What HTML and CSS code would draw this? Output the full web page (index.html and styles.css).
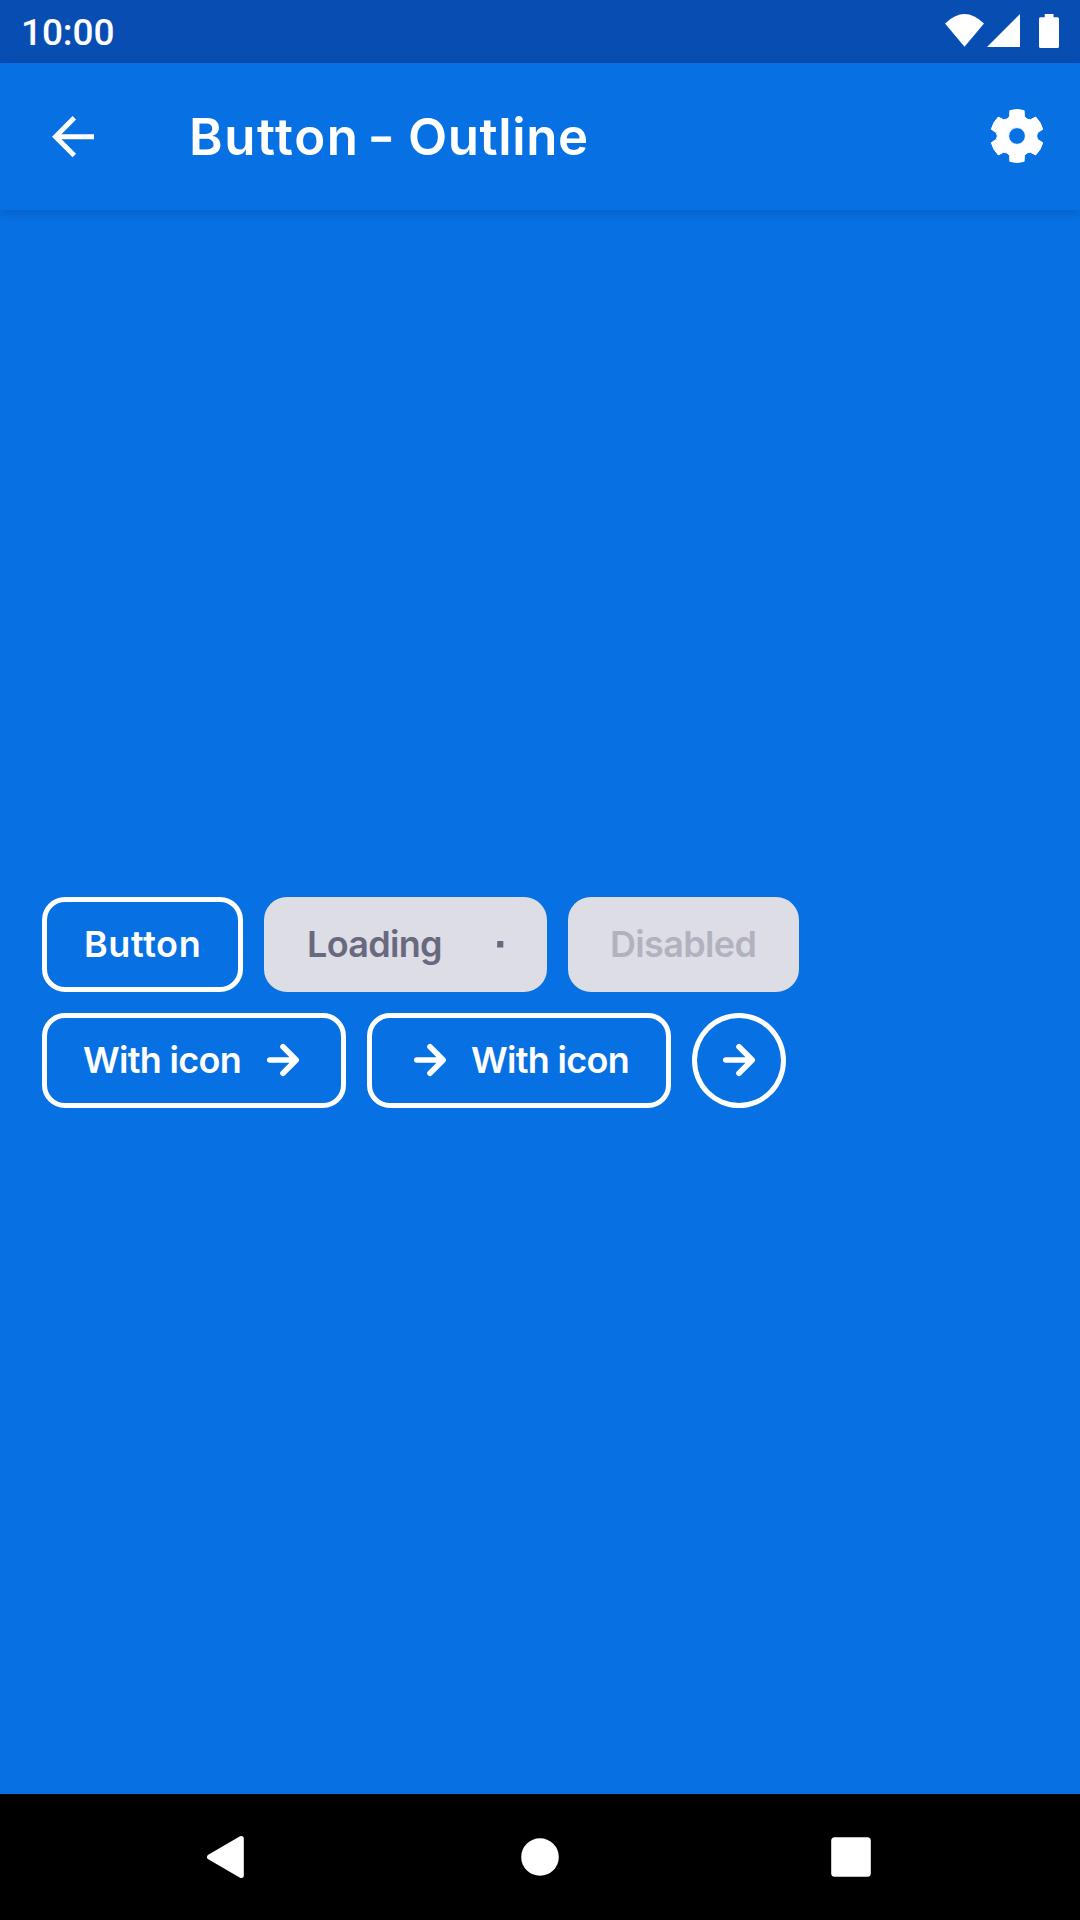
FILE: index.html
```html
<!DOCTYPE html>
<html lang="en">
<head>
<meta charset="utf-8">
<title>Button – Outline</title>
<link rel="stylesheet" href="styles.css">
</head>
<body>
<div class="screen">
  <div class="status-bar">
    <span class="clock">10:00</span>
    <svg class="status-icons" width="120" height="63" viewBox="0 0 120 63" fill="#fff">
      <path d="M5 23.500Q24.500 4.500 44 23.500L24.500 46.700Z"/>
      <path d="M80 14V47H47Z"/>
      <path d="M104.700 14h8.800v3.300h4a1.500 1.500 0 0 1 1.500 1.500v27.700a1.500 1.500 0 0 1-1.500 1.500h-17a1.500 1.500 0 0 1-1.500-1.500v-27.700a1.500 1.500 0 0 1 1.500-1.500h4.200Z"/>
    </svg>
  </div>
  <header class="app-bar">
    <svg class="back" width="42" height="42" viewBox="0 0 42 42" fill="none" stroke="#fff" stroke-width="5">
      <path d="M42 20.700H4M22.300 1.800L3.500 20.700L22.300 39.500"/>
    </svg>
    <h1 class="title"><span class="title-first">Button</span> <span class="title-dash">–</span> <span class="title-last">Outline</span></h1>
    <svg class="settings" width="54" height="56" viewBox="-27 -27 54 56">
      <path fill="#fff" stroke="#fff" stroke-width="1" stroke-linejoin="round" fill-rule="evenodd" d="M-25.700 6.700L-20.700 3.400Q-18.600 0 -20.700 -3.400L-25.700 -6.700A26 26 0 0 1 -18.700 -18.900L-13.290 -16.230Q-9.300 -16.100 -7.410 -19.630L-7.100 -25.400A26 26 0 0 1 7.100 -25.400L7.410 -19.630Q9.300 -16.100 13.290 -16.230L18.700 -18.900A26 26 0 0 1 25.700 -6.700L20.700 -3.400Q18.600 0 20.700 3.400L25.700 6.700A26 26 0 0 1 18.700 18.900L13.290 16.230Q9.300 16.100 7.410 19.630L7.100 25.400A26 26 0 0 1 -7.100 25.400L-7.410 19.630Q-9.300 16.100 -13.290 16.230L-18.700 18.900A26 26 0 0 1 -25.700 6.700ZM8.400 0A8.400 8.400 0 1 0 -8.400 0A8.400 8.400 0 1 0 8.400 0Z"/>
    </svg>
  </header>
  <main class="content">
    <div class="row">
      <button class="btn"><span class="label w-button">Button</span></button>
      <button class="btn filled loading"><span class="label w-loading">Loading</span>
        <svg width="42" height="42" viewBox="0 0 42 42"><path fill="#68697f" d="M34.300 18h6v6.600h-6.300Z"/></svg></button>
      <button class="btn filled disabled"><span class="label w-disabled">Disabled</span></button>
    </div>
    <div class="row">
      <button class="btn"><span class="label w-icon">With icon</span>
        <svg class="arrow" width="42" height="42" viewBox="0 0 42 42"><path d="M7.800 21H33.500M21 7.800L34.200 21L21 34.200"/></svg></button>
      <button class="btn"><svg class="arrow" width="42" height="42" viewBox="0 0 42 42"><path d="M7.800 21H33.500M21 7.800L34.200 21L21 34.200"/></svg>
        <span class="label w-icon">With icon</span></button>
      <button class="btn round"><svg class="arrow" width="42" height="42" viewBox="0 0 42 42"><path d="M7.800 21H33.500M21 7.800L34.200 21L21 34.200"/></svg></button>
    </div>
  </main>
  <nav class="nav-bar">
    <svg width="1080" height="126" viewBox="0 0 1080 126" fill="#fff">
      <path stroke="#fff" stroke-width="5" stroke-linejoin="round" d="M209.500 63L241.300 44.500V81.500Z"/>
      <circle cx="540" cy="63" r="18.800"/>
      <rect x="831.200" y="43.200" width="39.600" height="39.600" rx="3.500"/>
    </svg>
  </nav>
</div>
</body>
</html>
```
FILE: styles.css
```css
* { box-sizing: border-box; }

body {
  margin: 0;
  background: #0770e3;
  color: #fff;
  font-family: Inter, "Liberation Sans", sans-serif;
}

svg { display: block; flex: none; }

.screen {
  display: flex;
  flex-direction: column;
  width: 1080px;
  height: 1920px;
}

.status-bar {
  display: flex;
  flex: none;
  justify-content: space-between;
  height: 63px;
  padding: 0 20px 0 21px;
  background: #084eb2;
}

.clock {
  font: 500 37px/66px Roboto, sans-serif;
  letter-spacing: -0.1px;
}

.app-bar {
  display: flex;
  flex: none;
  align-items: center;
  height: 147px;
  padding: 0 36px 0 52px;
  box-shadow: 0 3px 9px rgba(0, 0, 0, 0.15);
}

.title {
  display: flex;
  flex: 1;
  align-items: baseline;
  margin: 0 0 0 95px;
  font-size: 51px;
  font-weight: 600;
  line-height: 60px;
  white-space: nowrap;
}

.title-first { width: 183px; letter-spacing: 1.6px; }
.title-dash { width: 36px; font-size: 36px; line-height: 50px; transform: translateY(-5px); -webkit-text-stroke: 1.5px #fff; }
.title-last { letter-spacing: 0.6px; }

.content {
  display: flex;
  flex: 1;
  flex-direction: column;
  justify-content: center;
  gap: 21px;
  padding-left: 42px;
}

.row { display: flex; gap: 21px; }

.btn {
  display: flex;
  align-items: center;
  gap: 21px;
  height: 95px;
  padding: 0 37px;
  border: 5px solid #fff;
  border-radius: 23px;
  background: transparent;
  color: #fff;
  font: 600 36px/44px Inter, "Liberation Sans", sans-serif;
}

.filled { border-color: #dddde5; background: #dddde5; }
.loading { color: #68697f; }
.disabled { color: #b2b2bf; }

.round {
  justify-content: center;
  width: 94px;
  padding: 0;
  border-radius: 50%;
}

.label { text-align: left; white-space: nowrap; }
.w-button { width: 117px; letter-spacing: 0.6px; }
.w-loading { width: 136px; padding-left: 1px; letter-spacing: -0.7px; }
.w-disabled { width: 147px; letter-spacing: -0.65px; }
.w-icon { width: 157px; margin: 0 1px 0 -1px; letter-spacing: -0.7px; }

.arrow {
  fill: none;
  stroke: #fff;
  stroke-width: 5.6;
  stroke-linecap: round;
  stroke-linejoin: round;
}

.nav-bar { flex: none; height: 126px; background: #000; }
```
